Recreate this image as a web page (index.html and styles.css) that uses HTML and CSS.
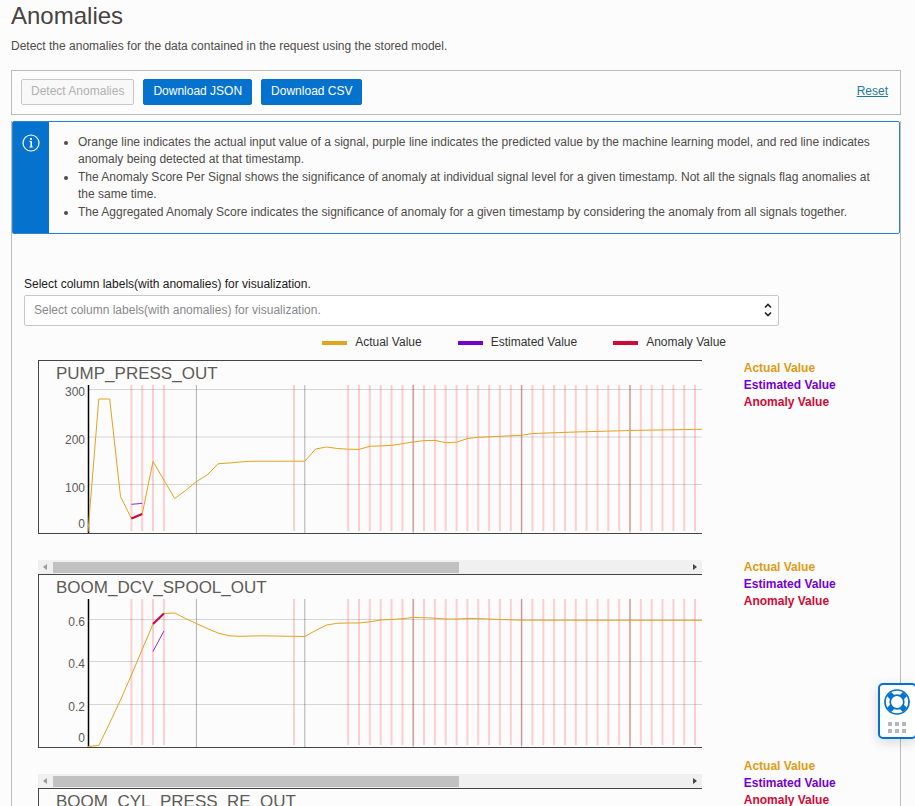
FILE: index.html
```html
<!DOCTYPE html>
<html lang="en">
<head>
<meta charset="utf-8">
<meta name="viewport" content="width=device-width, initial-scale=1">
<title>Anomalies</title>
<link rel="stylesheet" href="styles.css">
</head>
<body>
<main class="page">
  <h1 class="title">Anomalies</h1>
  <p class="intro">Detect the anomalies for the data contained in the request using the stored model.</p>

  <div class="toolbar">
    <button class="btn" type="button" disabled>Detect Anomalies</button>
    <button class="btn btn-primary" type="button">Download JSON</button>
    <button class="btn btn-primary" type="button">Download CSV</button>
    <a class="reset" href="#">Reset</a>
  </div>

  <section class="results">
    <div class="info">
      <div class="info-side">
        <svg class="info-icon" viewBox="0 0 18 18" aria-hidden="true">
          <circle cx="9" cy="9" r="8" fill="none" stroke="currentColor" stroke-width="1.2"/>
          <rect x="8" y="4" width="2" height="1.8" fill="currentColor"/>
          <path d="M7.4 7.4h1.8M7.4 13h3.4" fill="none" stroke="currentColor" stroke-width="1"/>
          <path d="M9.2 7v6" stroke="currentColor" stroke-width="1.5"/>
        </svg>
      </div>
      <ul class="info-list">
        <li>Orange line indicates the actual input value of a signal, purple line indicates the predicted value by the machine learning model, and red line indicates anomaly being detected at that timestamp.</li>
        <li>The Anomaly Score Per Signal shows the significance of anomaly at individual signal level for a given timestamp. Not all the signals flag anomalies at the same time.</li>
        <li>The Aggregated Anomaly Score indicates the significance of anomaly for a given timestamp by considering the anomaly from all signals together.</li>
      </ul>
    </div>

    <div class="picker">
      <label class="picker-label" for="columns">Select column labels(with anomalies) for visualization.</label>
      <div class="picker-box">
        <select class="picker-select" id="columns">
          <option>Select column labels(with anomalies) for visualization.</option>
        </select>
        <svg class="picker-arrows" viewBox="0 0 8 14" aria-hidden="true">
          <path d="M1 4.5 4 1.5 7 4.5M1 9.5 4 12.5 7 9.5" fill="none" stroke="currentColor" stroke-width="1.6"/>
        </svg>
      </div>
    </div>

    <ul class="legend">
      <li class="legend-item"><span class="swatch swatch-actual"></span>Actual Value</li>
      <li class="legend-item"><span class="swatch swatch-estimated"></span>Estimated Value</li>
      <li class="legend-item"><span class="swatch swatch-anomaly"></span>Anomaly Value</li>
    </ul>

    <div class="board">
      <div class="charts" id="charts"></div>
      <div class="notes">
        <ul class="note"><li class="actual">Actual Value</li><li class="estimated">Estimated Value</li><li class="anomaly">Anomaly Value</li></ul>
        <ul class="note"><li class="actual">Actual Value</li><li class="estimated">Estimated Value</li><li class="anomaly">Anomaly Value</li></ul>
        <ul class="note"><li class="actual">Actual Value</li><li class="estimated">Estimated Value</li><li class="anomaly">Anomaly Value</li></ul>
      </div>
    </div>
  </section>
</main>

<button class="help" type="button" aria-label="Help">
  <svg class="help-ring" viewBox="0 0 26 26" aria-hidden="true">
    <circle cx="13" cy="13" r="12" fill="none" stroke="currentColor" stroke-width="1.7"/>
    <circle cx="13" cy="13" r="6.8" fill="none" stroke="currentColor" stroke-width="1.7"/>
    <path d="M5 5 8.5 8.5M21 5 17.5 8.5M5 21 8.5 17.5M21 21 17.5 17.5" stroke="currentColor" stroke-width="6"/>
  </svg>
  <svg class="help-dots" viewBox="0 0 18 11" aria-hidden="true">
    <path d="M0 0h4v4H0zM7 0h4v4H7zM14 0h4v4h-4zM0 7h4v4H0zM7 7h4v4H7zM14 7h4v4h-4z" fill="currentColor"/>
  </svg>
</button>
<script src="charts.js"></script>
</body>
</html>
```
FILE: styles.css
```css
* { box-sizing: border-box; }

body {
  margin: 0;
  height: 100vh;
  overflow: hidden;
  background: #fcfcfc;
  color: #4f4b48;
  font: 12px/17px "Liberation Sans", Arial, sans-serif;
}

ul { margin: 0; padding: 0; list-style: none; }

.page { padding: 2px 14px 0 11px; }

.title {
  margin: 0;
  color: #47423e;
  font-size: 24px;
  font-weight: 400;
  line-height: 28px;
}

.intro { margin: 8px 0 15px; }

.toolbar {
  display: flex;
  align-items: center;
  gap: 9px;
  height: 45px;
  padding: 0 12px 2px 9px;
  border: 1px solid #bcbcbc;
}

.btn {
  height: 26px;
  padding: 0 9px;
  border: 1px solid #c4c8cb;
  border-radius: 2px;
  background: #f8f8f8;
  color: #b1b1b1;
  font: inherit;
}

.btn-primary {
  border-color: #0572ce;
  background: #0572ce;
  color: #fff;
}

.reset { margin-left: auto; color: #1f7b9e; }

.results {
  margin-top: 6px;
  border: 1px solid #bcbcbc;
  border-top: 0;
}

.info {
  display: flex;
  border: 1px solid #2a82d0;
  border-radius: 2px;
}

.info-side {
  flex: none;
  width: 36px;
  padding: 12px 9px;
  background: #0572ce;
  color: #fff;
}

.info-icon { display: block; width: 18px; height: 18px; }

.info-list {
  padding: 12px 16px 12px 29px;
  list-style: disc;
}

.info-list li + li { margin-top: 1px; }

.picker { width: 85%; margin: 42px 0 0 12px; }

.picker-label { display: block; margin-bottom: 2px; color: #1a1a1a; }

.picker-box { position: relative; }

.picker-select {
  width: 100%;
  height: 31px;
  padding: 0 9px;
  appearance: none;
  border: 1px solid #c4c8cc;
  border-radius: 2px;
  background: #fff;
  color: #85888a;
  font: inherit;
}

.picker-arrows {
  position: absolute;
  top: 8px;
  right: 7px;
  width: 8px;
  height: 14px;
  color: #222;
  pointer-events: none;
}

.legend {
  display: flex;
  justify-content: flex-end;
  gap: 36px;
  width: 714px;
  margin-top: 8px;
  color: #333;
}

.legend-item { display: flex; align-items: center; gap: 8px; }

.swatch { width: 25px; height: 4px; }
.swatch-actual { background: #e2a31f; }
.swatch-estimated { background: #7300d0; }
.swatch-anomaly { background: #cf0a36; }

.board { display: flex; margin: 9px 0 0 26px; }

.charts { flex: none; width: 77%; }

.chart { margin-bottom: 26px; overflow: hidden; }

.chart svg { display: block; }

.frame { fill: none; stroke: #444; }
.chart-title { fill: #5e5a56; font-size: 17px; }
.tick { fill: #5e5a56; font-size: 12px; text-anchor: end; }
.grid { stroke: #000; stroke-opacity: 0.15; }
.grid-x { stroke: #000; stroke-opacity: 0.3; }
.axis { stroke: #000; stroke-width: 1.5; }
.flag { stroke: #f00; stroke-opacity: 0.18; stroke-width: 2; }
.line { fill: none; stroke: #e2a31f; }
.line-estimated { stroke: #8a2be2; }
.line-anomaly { stroke: #d3003f; stroke-width: 2; }

.scroller {
  display: flex;
  align-items: center;
  height: 14px;
  padding: 0 5px;
  background: #f0f0f0;
  color: #444;
}

.scroller-track { flex: 1; height: 11px; margin: 0 6px; }
.scroller-thumb { width: 64%; height: 11px; background: #c1c1c1; }
.scroller-arrow { width: 4px; height: 6px; fill: currentColor; }
.scroller-back { color: #999; }

.notes { padding-left: 42px; font-weight: 700; }
.note { margin-bottom: 148px; }
.note li { white-space: nowrap; }
.actual { color: #e09a14; }
.estimated { color: #7300d0; }
.anomaly { color: #cf0a36; }

.help {
  position: fixed;
  top: 683px;
  right: -2px;
  display: flex;
  flex-direction: column;
  align-items: center;
  gap: 7px;
  width: 39px;
  height: 56px;
  padding: 4px 2px 0 0;
  border: 2px solid #0572ce;
  border-radius: 5px;
  background: #fff;
  box-shadow: 0 3px 12px rgba(0, 0, 0, 0.15);
  color: #0572ce;
}

.help-ring { width: 26px; height: 26px; }
.help-dots { width: 18px; height: 11px; color: #b2b8be; }
```
FILE: charts.js
```js
// Each point is [sample index, y]; y is measured from the top of the chart frame.
const STEP = 10.84;
const ORIGIN = 50;
const WIDTH = 1042;
const HEIGHT = 174;

const flags = [4, 5, 6, 7, 19];
for (let i = 24; i <= 84; i++) flags.push(i);

const charts = [
  {
    title: "PUMP_PRESS_OUT",
    ticks: [["300", 29.5, 36], ["200", 77, 84], ["100", 124.5, 132], ["0", null, 168]],
    actual: [[0, 172], [1, 39], [2, 39], [3, 136.5], [4, 158.5], [5, 154], [6, 101.5], [7, 120], [8, 138.5],
      [9, 130.5], [10, 121.5], [11, 115], [12, 103.7], [13, 103], [14, 102], [15, 101.3], [20, 101.2], [21, 89],
      [22, 87], [23, 88.5], [24, 89.2], [25, 89.4], [26, 86.3], [28, 85.4], [29, 83.6], [30, 82], [31, 80.6],
      [32, 80.4], [33, 82.7], [34, 82.2], [35, 78.5], [36, 77.3], [40, 75.3], [41, 73.5], [45, 72], [50, 70.5],
      [57, 69.2], [90, 68]],
    estimated: [[4, 144.3], [5, 143.4]],
    anomaly: [[4, 158.5], [5, 154]]
  },
  {
    title: "BOOM_DCV_SPOOL_OUT",
    ticks: [["0.6", 45.5, 52], ["0.4", 87.5, 94], ["0.2", 130.5, 137], ["0", null, 168]],
    actual: [[0, 172.5], [1, 171.5], [2, 149], [3, 126], [4, 101], [5, 75.5], [6, 50], [7, 39.5], [8, 39], [9, 44.5],
      [10, 49.5], [11, 54.5], [12, 59], [13, 61.8], [14, 62.3], [16, 61.8], [20, 62.5], [21, 56.5], [22, 51],
      [23, 49.3], [24, 49], [25, 49], [26, 47.8], [27, 46], [28, 45.5], [29, 44.7], [30, 43.5], [31, 43.7],
      [32, 44.2], [33, 45], [34, 45], [35, 44.5], [36, 44.6], [38, 45.5], [40, 46.2], [90, 46.5]],
    estimated: [[6, 77.5], [7, 57]],
    anomaly: [[6, 50], [7, 39.5]]
  },
  { title: "BOOM_CYL_PRESS_RE_OUT", ticks: [], actual: [], estimated: [], anomaly: [] }
];

const x = i => (ORIGIN + i * STEP).toFixed(1);
const points = list => list.map(([i, y]) => `${x(i)},${y}`).join(" ");
const line = (cls, x1, y1, x2, y2) => `<line class="${cls}" x1="${x1}" y1="${y1}" x2="${x2}" y2="${y2}"/>`;

function draw(chart) {
  const parts = [`<rect class="frame" x="0.5" y="0.5" width="${WIDTH - 1}" height="${HEIGHT - 1}"/>`];
  parts.push(`<text class="chart-title" x="18" y="19">${chart.title}</text>`);
  for (const [label, gridY, textY] of chart.ticks) {
    if (gridY !== null) parts.push(line("grid", ORIGIN, gridY, WIDTH, gridY));
    parts.push(`<text class="tick" x="47" y="${textY}">${label}</text>`);
  }
  for (let i = 10; i <= 90; i += 10) parts.push(line("grid-x", x(i), 25, x(i), 173));
  for (const i of flags) parts.push(line("flag", x(i), 25, x(i), 171));
  parts.push(line("axis", 50.5, 25, 50.5, 173));
  parts.push(`<polyline class="line" points="${points(chart.actual)}"/>`);
  parts.push(`<polyline class="line line-estimated" points="${points(chart.estimated)}"/>`);
  parts.push(`<polyline class="line line-anomaly" points="${points(chart.anomaly)}"/>`);
  return `<div class="chart"><svg width="${WIDTH}" height="${HEIGHT}" role="img" aria-label="${chart.title}">${parts.join("")}</svg></div>
    <div class="scroller">
      <svg class="scroller-arrow scroller-back" viewBox="0 0 4 6"><path d="M4 0v6L0 3z"/></svg>
      <div class="scroller-track"><div class="scroller-thumb"></div></div>
      <svg class="scroller-arrow" viewBox="0 0 4 6"><path d="M0 0v6l4-3z"/></svg>
    </div>`;
}

document.getElementById("charts").innerHTML = charts.map(draw).join("");
```
